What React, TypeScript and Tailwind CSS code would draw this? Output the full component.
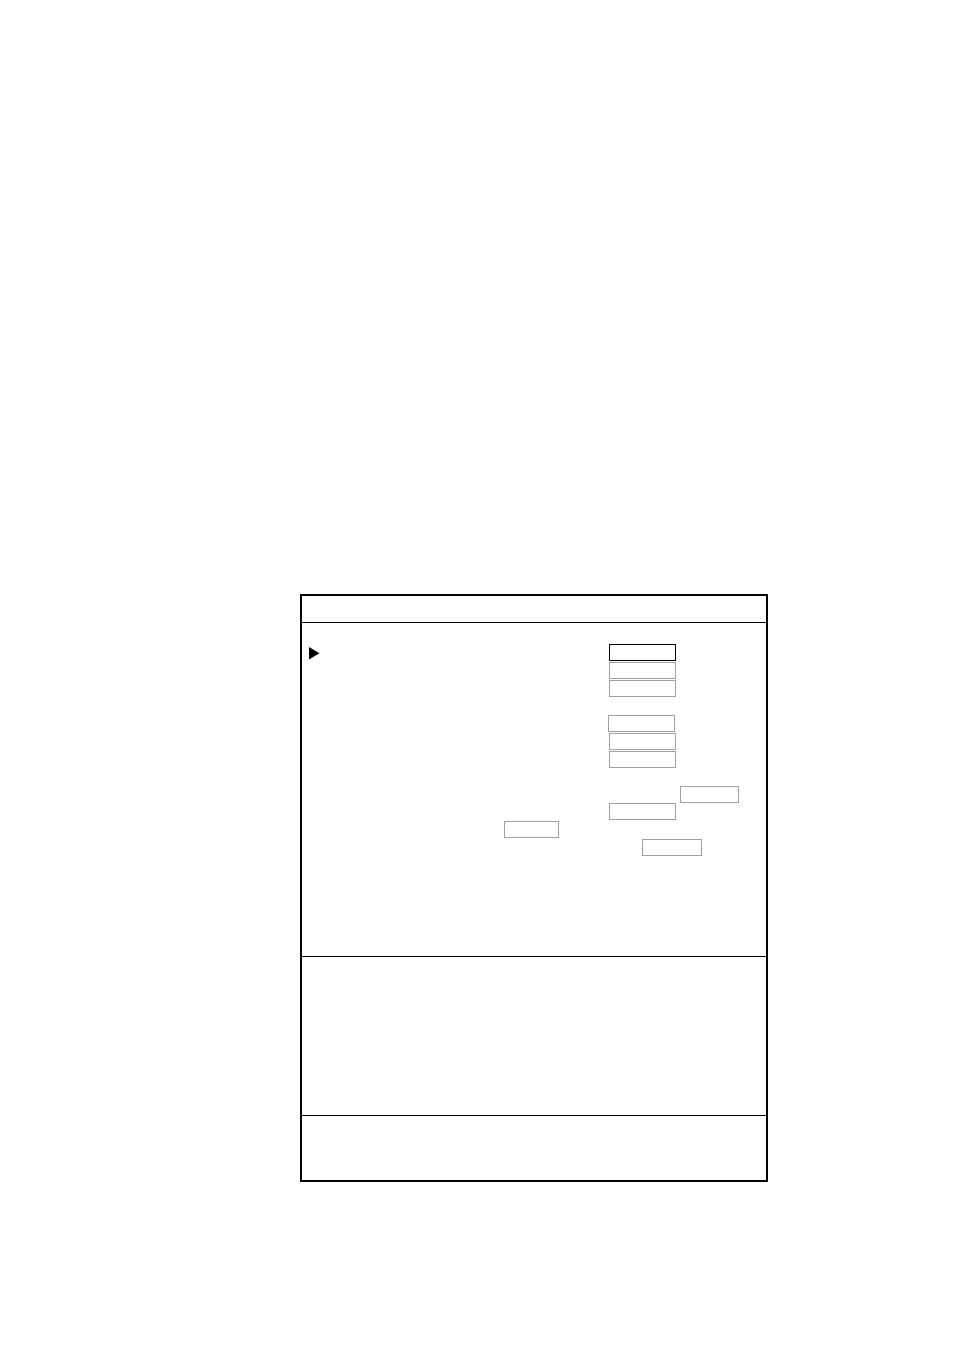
import React from "react";

const fields = [
  { name: "field-1", label: "w-[307px]", box: "w-[67px] border-black", space: "", current: true },
  { name: "field-2", label: "w-[307px]", box: "w-[67px] border-[#a0a0a0]", space: "mt-px" },
  { name: "field-3", label: "w-[307px]", box: "w-[67px] border-[#a0a0a0]", space: "mt-px" },
  { name: "field-4", label: "w-[306px]", box: "w-[67px] border-[#a0a0a0]", space: "mt-[18px]" },
  { name: "field-5", label: "w-[307px]", box: "w-[67px] border-[#a0a0a0]", space: "mt-px" },
  { name: "field-6", label: "w-[307px]", box: "w-[67px] border-[#a0a0a0]", space: "mt-px" },
  { name: "field-7", label: "w-[378px]", box: "w-[59px] border-[#a0a0a0]", space: "mt-[18px]" },
  { name: "field-8", label: "w-[307px]", box: "w-[67px] border-[#a0a0a0]", space: "" },
  { name: "field-9", label: "w-[202px]", box: "w-[55px] border-[#a0a0a0]", space: "mt-px" },
  { name: "field-10", label: "w-[340px]", box: "w-[60px] border-[#a0a0a0]", space: "mt-px" },
];

function Marker() {
  return (
    <svg className="mt-[3px] ml-[7px] h-[13px] w-[11px]" viewBox="0 0 11 13">
      <path d="M0 0 L10.5 6.2 L0 12.4 Z" fill="#000" />
    </svg>
  );
}

function App() {
  return (
    <div className="min-h-screen bg-white pt-[594px] pr-[186px] pb-[169px] pl-[300px] font-['Liberation_Sans',sans-serif] text-xs text-black">
      <main className="border-2 border-black">
        <header className="min-h-[27px] border-b border-black"></header>
        <form className="min-h-[334px] border-b border-black pt-[21px]">
          {fields.map((field) => (
            <div key={field.name} className={`flex h-[17px] ${field.space}`}>
              <label htmlFor={field.name} className={`shrink-0 ${field.label}`}>
                {field.current && <Marker />}
              </label>
              <input
                id={field.name}
                name={field.name}
                type="text"
                aria-label={field.name}
                className={`h-[17px] border bg-white px-1 outline-none ${field.box}`}
              />
            </div>
          ))}
        </form>
        <section className="min-h-[159px] border-b border-black"></section>
        <footer className="min-h-16"></footer>
      </main>
    </div>
  );
}

export default App;
